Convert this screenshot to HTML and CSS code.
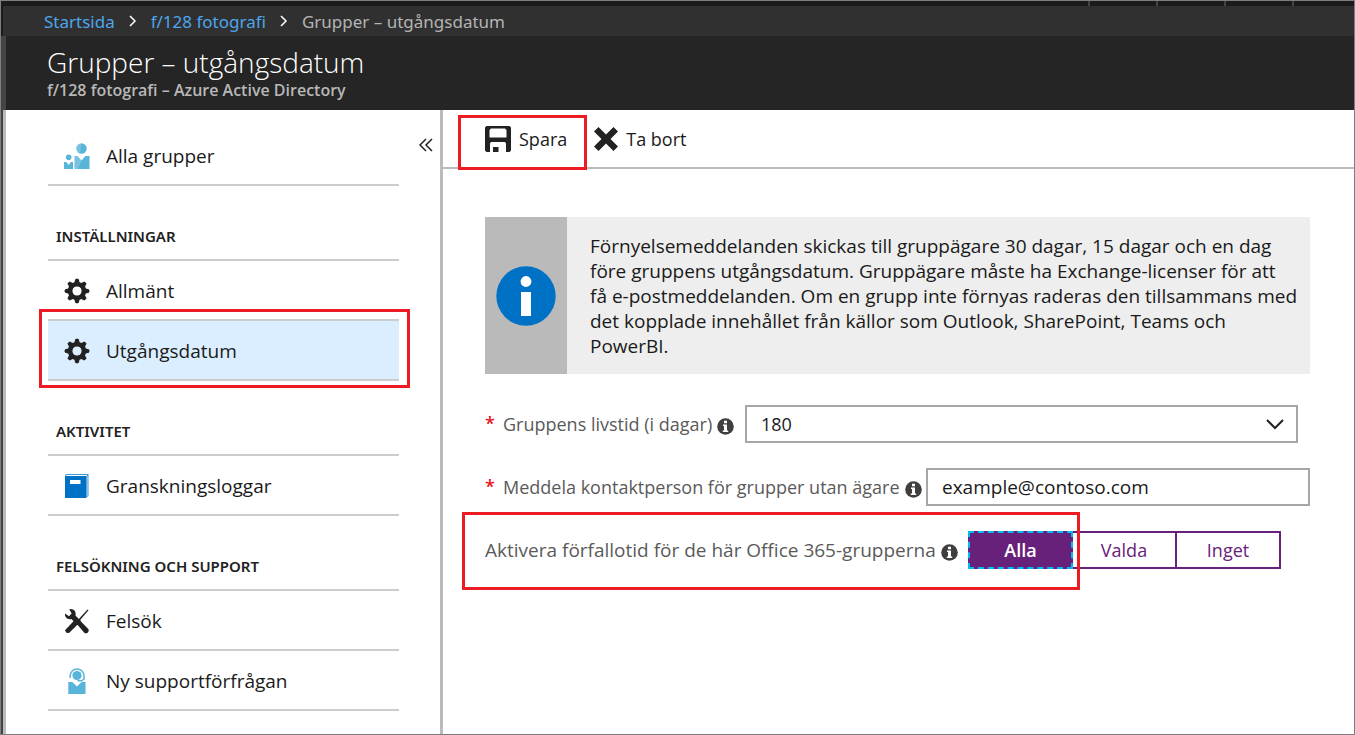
FILE: index.html
```html
<!DOCTYPE html>
<html lang="sv">
<head>
<meta charset="utf-8">
<title>Grupper – utgångsdatum</title>
<link rel="stylesheet" href="styles.css">
</head>
<body>
<svg class="sprite" aria-hidden="true">
  <symbol id="gear" viewBox="0 0 26 26">
    <path fill-rule="evenodd" d="M11.2 1.2 13 .4l1.8.8.8 3.2 1.6.7L20.4 3.400 22.600 5.600 21 8.800l.7 1.600 3.100.8.8 1.800-.8 1.800-3.100.8-.7 1.600 1.600 3.200-2.200 2.200-3.200-1.700-1.600.7-.8 3.200-1.800.8-1.800-.8-.8-3.200-1.600-.7-3.200 1.700-2.200-2.200L5 17.200l-.7-1.600-3.100-.8L.4 13l.8-1.800 3.100-.8L5 8.800 3.400 5.600l2.200-2.200 3.200 1.700 1.600-.7zM13 8.200a4.800 4.800 0 1 0 0 9.600 4.800 4.800 0 0 0 0-9.600z"/>
    <path fill-rule="evenodd" d="M13 4a9 9 0 1 0 0 18 9 9 0 0 0 0-18zm0 4.200a4.800 4.800 0 1 1 0 9.600 4.800 4.800 0 0 1 0-9.600z"/>
  </symbol>
  <symbol id="info" viewBox="0 0 17 17">
    <circle cx="8.500" cy="8.500" r="8.300" fill="#3f3f3f"/>
    <path fill="#fff" d="M7 2.800h3v2.400H7zM6 6.500h4v6h1.200V14H5.800v-1.500H7V8H6z"/>
  </symbol>
</svg>
<div class="portal">
  <div class="topstrip"><span class="tick"></span><span class="tick"></span><span class="tick"></span><span class="tick"></span></div>
  <nav class="crumbs" aria-label="Sökväg">
    <a href="#">Startsida</a>
    <svg class="sep" viewBox="0 0 8 12"><path d="M1 1l5 5-5 5"/></svg>
    <a href="#">f/128 fotografi</a>
    <svg class="sep" viewBox="0 0 8 12"><path d="M1 1l5 5-5 5"/></svg>
    <span>Grupper – utgångsdatum</span>
  </nav>
  <header class="title">
    <h1>Grupper – utgångsdatum</h1>
    <p>f/128 fotografi – Azure Active Directory</p>
  </header>
  <div class="blade">
    <aside class="sidebar">
      <nav class="menu">
        <a class="item" href="#">
          <svg class="icon" viewBox="0 0 26 26"><g fill="#59b4d9"><circle cx="17.500" cy="5.500" r="5.200"/><circle cx="4.700" cy="14.200" r="2.800"/><path d="M10.500 13h3l4 4.500 4-4.500H25.500v13h-15zM0 19h2.300l2.400 3 2.300-3h2v7H0z"/></g><path fill="#fff" opacity=".2" d="M17.500.3a5.200 5.200 0 0 0-1.500 10.200zM10.500 13h3l4 4.500L14 26h-3.500z"/></svg>
          <span>Alla grupper</span>
        </a>
        <h2>INSTÄLLNINGAR</h2>
        <a class="item" href="#"><svg class="icon"><use href="#gear"/></svg><span>Allmänt</span></a>
        <a class="item selected" href="#" aria-current="page"><svg class="icon"><use href="#gear"/></svg><span>Utgångsdatum</span></a>
        <h2>AKTIVITET</h2>
        <a class="item" href="#">
          <svg class="icon" viewBox="0 0 26 26"><path fill="#3f96d5" d="M1 3l1-2h22.500v22L22 25z"/><path fill="#fff" d="M2.500 2H23v1H2z"/><path fill="#8dc0e6" d="M22.600 3H24v20l-1.400 1z"/><path fill="#0072c6" d="M1 3h21v22H1z"/><path fill="#fff" d="M6 7h10.500v4H6z"/></svg>
          <span>Granskningsloggar</span>
        </a>
        <h2>FELSÖKNING OCH SUPPORT</h2>
        <a class="item" href="#">
          <svg class="icon" viewBox="0 0 26 26"><path d="M1 5.500l4 2.800 2.600-2.800L5.300 1.300C9 .2 12.600 3.300 11.500 7.500l3.300 3.400L23.500 1.500l1 .8-8.300 9.700 1 1.700 7.300 7.500c1 3-1.800 4.800-4 3.800L13.700 17l-.6-.1L5 25l-2.700-.3L1 22.200l8.500-9-2-2.200C3.500 12 .5 9 1 5.500z"/></svg>
          <span>Felsök</span>
        </a>
        <a class="item" href="#">
          <svg class="icon" viewBox="0 0 26 26"><g fill="#59b4d9"><circle cx="13" cy="7.500" r="4.600"/><path d="M4.300 14h4L13 18.500l4.500-4.500h4V26H4.300z"/></g><path fill="none" stroke="#59b4d9" stroke-width="1.500" d="M6.200 10V7.800a6.900 6.900 0 0 1 13.800 0V11l-2.500 1.800h-4"/></svg>
          <span>Ny supportförfrågan</span>
        </a>
      </nav>
      <button class="collapse" type="button" aria-label="Dölj menyn"><svg viewBox="0 0 14 14"><path d="M7 1L1 7l6 6M13 1L7 7l6 6"/></svg></button>
    </aside>
    <main class="content">
      <div class="toolbar">
        <button class="tool marked" type="button">
          <svg class="icon" viewBox="0 0 26 26"><path fill-rule="evenodd" d="M1.500 0h23L26 1.500v23L24.500 26H21v-8.500L20 16H6l-1 1.500V26H1.500L0 24.500v-23zM6 2.500 4.500 4v7.500h17V4L20 2.500zM8 21h5.500v5H8z"/></svg>
          <span>Spara</span>
        </button>
        <button class="tool" type="button">
          <svg class="cross" viewBox="0 0 24 24"><path d="M4.500 0 12 7.500 19.500 0 24 4.500 16.500 12l7.500 7.500-4.500 4.500-7.500-7.500L4.500 24 0 19.500 7.500 12 0 4.500z"/></svg>
          <span>Ta bort</span>
        </button>
      </div>
      <div class="body">
        <section class="notice">
          <div class="badge"><svg viewBox="0 0 60 60"><circle cx="30" cy="30" r="29.700" fill="#0072c6"/><circle cx="30" cy="15.500" r="5.400" fill="#fff"/><path fill="#fff" d="M25 26h10v24H25z"/></svg></div>
          <p>Förnyelsemeddelanden skickas till gruppägare 30 dagar, 15 dagar och en dag<br>före gruppens utgångsdatum. Gruppägare måste ha Exchange-licenser för att<br>få e-postmeddelanden. Om en grupp inte förnyas raderas den tillsammans med<br>det kopplade innehållet från källor som Outlook, SharePoint, Teams och<br>PowerBI.</p>
        </section>
        <form class="form">
          <div class="row lifetime">
            <label for="lifetime"><span class="req">*</span><span>Gruppens livstid (i dagar)</span><svg class="tip"><use href="#info"/></svg></label>
            <div class="select"><select id="lifetime"><option>180</option></select><svg viewBox="0 0 18 11"><path d="M1 1l8 8 8-8"/></svg></div>
          </div>
          <div class="row contact">
            <label for="contact"><span class="req">*</span><span>Meddela kontaktperson för grupper utan ägare</span><svg class="tip"><use href="#info"/></svg></label>
            <input id="contact" type="email" value="example@contoso.com">
          </div>
          <div class="row scope marked">
            <div class="label" id="scope"><span>Aktivera förfallotid för de här Office 365-grupperna</span><svg class="tip"><use href="#info"/></svg></div>
            <div class="segments" role="group" aria-labelledby="scope">
              <button class="on" type="button" aria-pressed="true">Alla</button>
              <button type="button" aria-pressed="false">Valda</button>
              <button type="button" aria-pressed="false">Inget</button>
            </div>
          </div>
        </form>
      </div>
    </main>
  </div>
</div>
</body>
</html>
```
FILE: styles.css
```css
* { box-sizing: border-box; }
body { margin: 0; font-family: "Open Sans", "Noto Sans", sans-serif; font-size: 19px; color: #1a1a1a; background: #fff; }
h1, h2, p { margin: 0; }
button, input, select { font: inherit; color: inherit; border-radius: 0; }
.sprite { position: absolute; width: 0; height: 0; }
.portal { display: flex; flex-direction: column; min-height: 100vh; border: 1px solid #7f7f7f; }

.topstrip { display: flex; justify-content: flex-end; gap: 66px; height: 5px; padding-right: 60px; background: #1b1b1b; }
.tick { width: 2px; background: #444; }
.crumbs { display: flex; align-items: center; gap: 14px; height: 30px; padding-left: 41px; border-left: 2px solid #1b1b1b; background: #303030; color: #b4b4b4; font-family: "Noto Sans", sans-serif; font-size: 17px; }
.crumbs a { color: #4da6ee; text-decoration: none; }
.sep { width: 8px; height: 12px; fill: none; stroke: #fff; stroke-width: 1.5; }
.title { height: 74px; padding: 6px 0 0 41px; border-left: 5px solid #444; background: #252525; color: #fff; }
.title h1 { font-size: 28px; font-weight: 300; line-height: 40px; }
.title p { color: #b8b8b8; font-size: 16px; font-weight: 600; line-height: 16px; }

.blade { display: flex; flex: 1; border-left: 2px solid #444; }
.sidebar { display: flex; flex: none; width: 440px; padding: 16px 0 23px 42px; border: solid #bbb; border-width: 0 3px; }
.menu { flex: 1; }
.item { display: flex; align-items: center; gap: 16px; position: relative; height: 60px; padding: 2px 0 0 16px; border-bottom: 2px solid #ccc; color: inherit; text-decoration: none; }
.icon { flex: none; width: 26px; height: 26px; fill: #222; }
.item.selected { background: #dbeeff; box-shadow: 0 -2px #ccc; }
.item.selected::after { content: ""; position: absolute; inset: -12px -11px -9px -9px; border: 3px solid #ed1c24; }
.menu h2 { height: 75px; padding: 27px 8px 0; border-bottom: 2px solid #ccc; color: #222; font-family: "Noto Sans", sans-serif; font-size: 15px; font-weight: 600; line-height: 46px; }
.collapse { align-self: flex-start; width: 41px; padding: 12px 0 0 20px; border: 0; background: none; }
.collapse svg { display: block; width: 14px; height: 14px; fill: none; stroke: #222; stroke-width: 1.5; }

.content { flex: 1; min-width: 0; }
.toolbar { display: flex; align-items: center; height: 59px; padding-left: 42px; gap: 27px; border-bottom: 2px solid #bbb; font-size: 18px; }
.tool { display: flex; align-items: center; gap: 8px; position: relative; padding: 0; border: 0; background: none; }
.tool .cross { width: 24px; height: 24px; fill: #222; }
.tool.marked::after { content: ""; position: absolute; inset: -11px -20px -18px -27px; border: 3px solid #ed1c24; }
.body { padding: 48px 44px 48px 42px; }
.notice { display: flex; background: #eee; }
.badge { display: flex; flex: none; align-items: center; justify-content: center; width: 82px; background: #bababa; }
.badge svg { width: 60px; height: 60px; }
.notice p { padding: 17px 0 15px 23px; line-height: 25px; }

.form { display: grid; gap: 25px; margin-top: 31px; }
.row { display: flex; position: relative; height: 38px; color: #5a5a5a; }
.row label, .label { display: flex; flex: none; align-items: center; gap: 5px; }
.row label { font-size: 18px; }
.lifetime { padding-right: 12px; }
.lifetime label { width: 260px; }
.contact label { width: 441px; }
.scope .label { width: 483px; }
.req { align-self: flex-start; width: 13px; color: #e81123; font-weight: 600; line-height: 36px; }
.tip { flex: none; width: 17px; height: 17px; margin-top: 4px; }
.select { display: grid; flex: 1; position: relative; }
.row select, .row input { min-width: 0; padding: 0 14px; border: 2px solid #a6a6a6; background: #fff; color: #1a1a1a; appearance: none; }
.row select { font-size: 18px; }
.row input { flex: 1; }
.select svg { position: absolute; top: 14px; right: 14px; width: 18px; height: 11px; fill: none; stroke: #222; stroke-width: 2; pointer-events: none; }
.scope { justify-self: start; }
.segments { display: flex; font-size: 18px; }
.segments button { width: 104px; padding: 0; border: 2px solid #68217a; border-left-width: 0; background: #fff; color: #68217a; }
.segments .on { width: 105px; border: 2px dashed #00bcf2; background: #68217a; color: #fff; font-weight: 600; }
.scope.marked::after { content: ""; position: absolute; inset: -19px 201px -21px -23px; border: 3px solid #ed1c24; pointer-events: none; }
```
